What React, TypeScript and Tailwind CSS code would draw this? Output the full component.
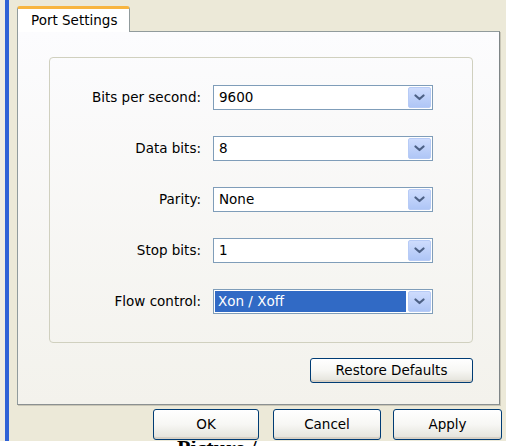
const rows = [
  { label: "Bits per second:", value: "9600" },
  { label: "Data bits:", value: "8" },
  { label: "Parity:", value: "None" },
  { label: "Stop bits:", value: "1" },
  { label: "Flow control:", value: "Xon / Xoff", selected: true },
];

const xpButton =
  "flex items-center justify-center rounded-[3px] border border-[#003C74] bg-gradient-to-b from-white via-[#F7F7F4] to-[#E3E2DA] shadow-[inset_0_-2px_0_#D6D0C5]";

function ComboArrow() {
  return (
    <div className="flex h-[21px] w-[23px] items-center justify-center rounded-[2px] border border-[#B7CBF6] bg-gradient-to-b from-[#CEDCFD] to-[#AFC6F6]">
      <svg width="11" height="7" viewBox="0 0 11 7">
        <path
          d="M1.5 1.5 L5.5 5 L9.5 1.5"
          fill="none"
          stroke="#4D6185"
          strokeWidth="2.2"
          strokeLinecap="round"
          strokeLinejoin="round"
        />
      </svg>
    </div>
  );
}

function Combo({ value, selected }: { value: string; selected?: boolean }) {
  return (
    <div className="flex h-[25px] w-[220px] items-center border border-[#7F9DB9] bg-white p-[1px]">
      <div className="flex h-full flex-1 items-center pr-[2px]">
        <span
          className={
            selected
              ? "flex h-full w-full items-center bg-[#316AC5] pl-[3px] text-white"
              : "pl-[4px]"
          }
        >
          {value}
        </span>
      </div>
      <ComboArrow />
    </div>
  );
}

export default function App() {
  return (
    <div className="flex h-[446px] w-[506px] flex-col overflow-hidden bg-[#ECE9D8] font-['DejaVu_Sans',sans-serif] text-[13.5px] leading-none text-black">
      <div className="flex h-[441px]">
        <div className="w-[5px] bg-[#EFEDE2]" />
        <div className="w-[4px] bg-[#2F62D6]" />
        <div className="w-[8px]" />
        <div className="flex w-[485px] flex-col">
          {/* tab strip */}
          <div className="flex h-[31px] items-end">
            <div className="relative z-10 -mb-px flex h-[26px] w-[113px] items-center rounded-t-[3px] border-x border-t-[3px] border-x-[#919B9C] border-t-[#F8B53F] bg-white pl-[13px]">
              Port Settings
            </div>
          </div>

          {/* tab page */}
          <div className="flex h-[374px] w-[483px] flex-col border border-[#919B9C] border-r-[#7E8587] border-b-[#8B9091] bg-gradient-to-b from-[#FCFCFE] to-[#F3F2EC] pl-[31px] pt-[25px] shadow-[1px_1px_0_#C9C6B6]">
            <div className="flex h-[286px] w-[424px] flex-col gap-[26px] rounded-[4px] border border-[#D0D0BF] pt-[27px]">
              {rows.map((row) => (
                <div key={row.label} className="flex items-center">
                  <div className="w-[151px] text-right">{row.label}</div>
                  <div className="ml-[12px]">
                    <Combo value={row.value} selected={row.selected} />
                  </div>
                </div>
              ))}
            </div>
            <div className="mt-[15px] flex w-[424px] justify-end">
              <button type="button" className={`${xpButton} h-[25px] w-[163px]`}>
                Restore Defaults
              </button>
            </div>
          </div>

          {/* dialog buttons */}
          <div className="mt-[4px] flex pl-[136px]">
            <button type="button" className={`${xpButton} h-[31px] w-[106px]`}>
              OK
            </button>
            <button
              type="button"
              className={`${xpButton} ml-[14px] h-[31px] w-[108px]`}
            >
              Cancel
            </button>
            <button
              type="button"
              className={`${xpButton} ml-[12px] h-[31px] w-[109px]`}
            >
              Apply
            </button>
          </div>
        </div>
      </div>
      <div className="h-[5px] overflow-hidden bg-white pl-[177px]">
        <div className="-mt-[4px] font-['Liberation_Serif',serif] text-[22px] font-bold leading-none">
          Picture /
        </div>
      </div>
    </div>
  );
}
